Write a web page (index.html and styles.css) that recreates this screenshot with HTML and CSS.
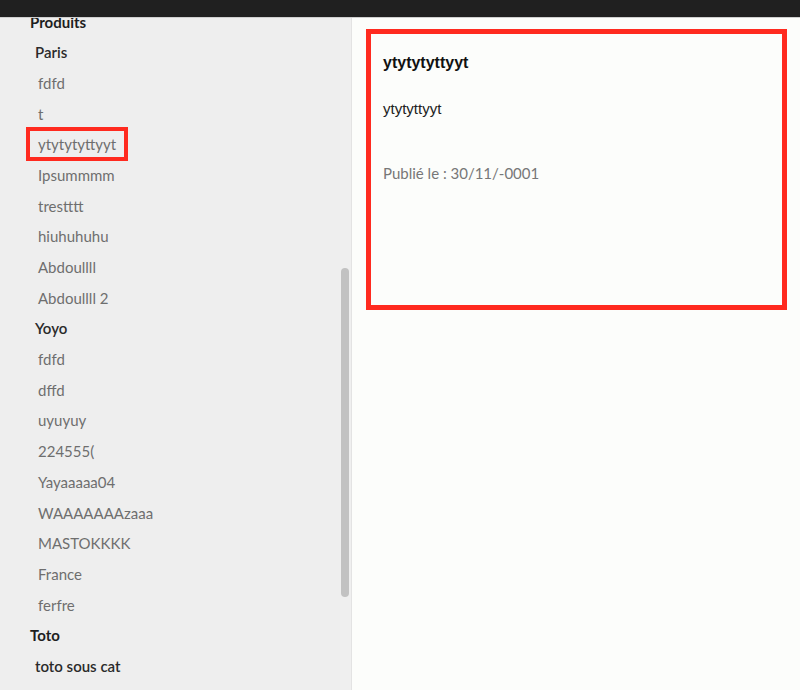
FILE: index.html
```html
<!DOCTYPE html>
<html lang="fr">
<head>
   <meta charset="UTF-8">
   <meta name="viewport" content="width=device-width, initial-scale=1.0">
   <title>Produits</title>
   <link rel="stylesheet" href="styles.css">
</head>
<body>
   <header class="topbar"></header>
   <div class="layout">
      <aside class="side-wrap">
         <nav class="sidebar" id="sidebar">
            <ul class="cat-list">
               <li class="cat">
                  <span class="cat-name">Actualités</span>
                  <ul class="sub-list">
                     <li class="sub">
                        <span class="sub-name">Événements</span>
                        <ul class="item-list">
                           <li><a href="#">Salon 2023</a></li>
                           <li><a href="#">Portes ouvertes</a></li>
                           <li><a href="#">Atelier</a></li>
                        </ul>
                     </li>
                     <li class="sub">
                        <span class="sub-name">Presse</span>
                        <ul class="item-list">
                           <li><a href="#">Communiqué</a></li>
                           <li><a href="#">Interview</a></li>
                        </ul>
                     </li>
                  </ul>
               </li>
               <li class="cat">
                  <span class="cat-name">Services</span>
                  <ul class="sub-list">
                     <li class="sub">
                        <span class="sub-name">Conseil</span>
                        <ul class="item-list">
                           <li><a href="#">Audit</a></li>
                           <li><a href="#">Formation</a></li>
                           <li><a href="#">Accompagnement</a></li>
                        </ul>
                     </li>
                     <li class="sub">
                        <span class="sub-name">Support</span>
                        <ul class="item-list">
                           <li><a href="#">FAQ</a></li>
                           <li><a href="#">Contact</a></li>
                        </ul>
                     </li>
                  </ul>
               </li>
               <li class="cat" id="cat-produits">
                  <span class="cat-name">Produits</span>
                  <ul class="sub-list">
                     <li class="sub">
                        <span class="sub-name">Paris</span>
                        <ul class="item-list">
                           <li><a href="#">fdfd</a></li>
                           <li><a href="#">t</a></li>
                           <li><a href="#" class="active">ytytytyttyyt</a></li>
                           <li><a href="#">Ipsummmm</a></li>
                           <li><a href="#">trestttt</a></li>
                           <li><a href="#">hiuhuhuhu</a></li>
                           <li><a href="#">Abdoullll</a></li>
                           <li><a href="#">Abdoullll 2</a></li>
                        </ul>
                     </li>
                     <li class="sub">
                        <span class="sub-name">Yoyo</span>
                        <ul class="item-list">
                           <li><a href="#">fdfd</a></li>
                           <li><a href="#">dffd</a></li>
                           <li><a href="#">uyuyuy</a></li>
                           <li><a href="#">224555(</a></li>
                           <li><a href="#">Yayaaaaa04</a></li>
                           <li><a href="#">WAAAAAAAzaaa</a></li>
                           <li><a href="#">MASTOKKKK</a></li>
                           <li><a href="#">France</a></li>
                           <li><a href="#">ferfre</a></li>
                        </ul>
                     </li>
                  </ul>
               </li>
               <li class="cat">
                  <span class="cat-name">Toto</span>
                  <ul class="sub-list">
                     <li class="sub">
                        <span class="sub-name">toto sous cat</span>
                     </li>
                  </ul>
               </li>
            </ul>
         </nav>
         <div class="scroll-track">
            <div class="scroll-thumb" id="thumb"></div>
         </div>
      </aside>
      <main class="content">
         <article class="post">
            <h2 class="post-title">ytytytyttyyt</h2>
            <p class="post-body">ytytyttyyt</p>
            <p class="post-date">Publié le : 30/11/-0001</p>
         </article>
      </main>
   </div>
   <script src="content.js"></script>
</body>
</html>
```

FILE: styles.css
```css
:root {
   --bar-bg: #202020;
   --side-bg: #eeeeee;
   --main-bg: #fcfdfb;
   --accent: #ff2a1f;
}
* {
   box-sizing: border-box;
}
html, body {
   height: 100%;
}
body {
   margin: 0;
   padding: 0;
   display: flex;
   flex-direction: column;
   overflow: hidden;
   background: var(--main-bg);
   font-family: Lato, "Noto Sans", sans-serif;
}
ul {
   list-style: none;
   margin: 0;
   padding: 0;
}
.topbar {
   height: 18px;
   flex-shrink: 0;
   background: var(--bar-bg);
   border-bottom: 1px solid #cfcfcf;
}
.layout {
   flex: 1;
   display: flex;
   min-height: 0;
}

/* Sidebar menu */
.side-wrap {
   width: 352px;
   flex-shrink: 0;
   display: flex;
   background: var(--side-bg);
   border-right: 1px solid #e3e3e3;
}
.sidebar {
   position: relative;
   flex: 1;
   overflow-y: scroll;
   scrollbar-width: none;
   padding: 8px 0 199px;
   font-size: 15px;
}
/* our own scrollbar, sized by content.js */
.scroll-track {
   position: relative;
   width: 11px;
   background: #efefef;
}
.scroll-thumb {
   position: absolute;
   left: 1px;
   width: 8px;
   border-radius: 4px;
   background: #c2c2c2;
}
.cat-name, .sub-name, .item-list li {
   display: block;
   line-height: 30.67px;
}
.cat-name {
   padding-left: 30px;
   font-weight: 700;
   color: #1e1e1e;
}
.sub-name {
   padding-left: 35px;
   font-weight: 600;
   color: #2a2a2a;
}
.item-list a {
   display: inline-block;
   margin-left: 30px;
   padding: 0 8px;
   line-height: 26px;
   color: #6e6e6e;
   text-decoration: none;
}
.item-list a.active {
   outline: 4.5px solid var(--accent);
}

/* Article panel */
.content {
   flex: 1;
   padding: 11px 13px 0 14px;
}
.post {
   height: 281px;
   border: 5px solid var(--accent);
   padding: 20px 12px;
}
.post-title {
   margin: 0 0 28px;
   font-family: "Liberation Sans", Arial, sans-serif;
   font-size: 16px;
   line-height: 18px;
   color: #111;
}
.post-body {
   margin: 0 0 47px;
   font-family: "Liberation Sans", Arial, sans-serif;
   font-size: 15px;
   line-height: 17px;
   color: #222;
}
.post-date {
   margin: 0;
   font-size: 15px;
   line-height: 18px;
   color: #777;
}
```

FILE: content.js
```js
// open the menu on the "Produits" section
const sidebar = document.getElementById('sidebar');
const current = document.getElementById('cat-produits');
const thumb = document.getElementById('thumb');

function updateThumb() {
   const track = thumb.parentNode.clientHeight;
   const h = track * sidebar.clientHeight / sidebar.scrollHeight;
   const max = sidebar.scrollHeight - sidebar.clientHeight;
   const top = max > 0 ? (track - h) * sidebar.scrollTop / max : 0;
   thumb.style.height = h + 'px';
   thumb.style.top = top + 'px';
}

sidebar.scrollTop = current.offsetTop + 11;
sidebar.addEventListener('scroll', updateThumb);
updateThumb();
```
